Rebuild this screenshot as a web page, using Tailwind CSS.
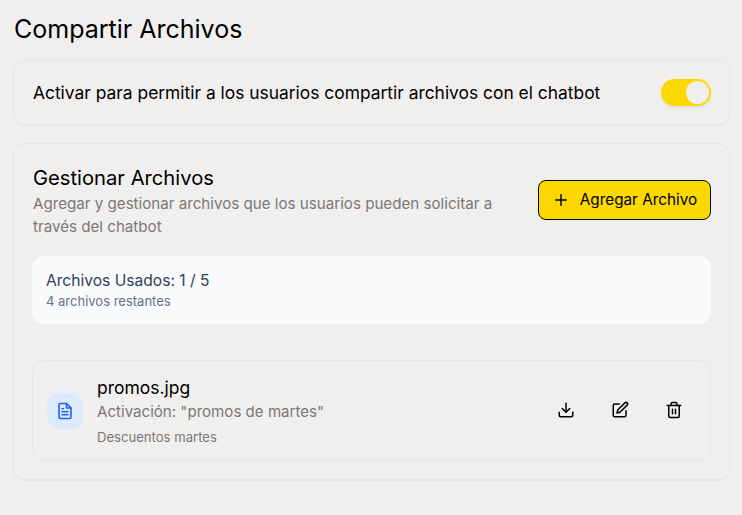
<!DOCTYPE html>
<html lang="es">
<head>
    <meta charset="utf-8">
    <title>Compartir Archivos</title>
    <script src="https://cdn.jsdelivr.net/npm/@tailwindcss/browser@4"></script>
</head>
<body class="min-h-screen bg-[#f1efee] overflow-hidden font-['Inter',sans-serif] text-black">
    <main class="w-[742px] pl-[13px] pr-[12px] pt-[13px]">
        <h1 class="pl-[1px] text-[25px] leading-8 font-normal">Compartir Archivos</h1>

        <section class="mt-[15px] h-[65px] pl-[19px] pr-[18px] flex items-center justify-between border border-[#e9e7e6] rounded-xl shadow-xs">
            <p class="text-[17.4px] leading-6">Activar para permitir a los usuarios compartir archivos con el chatbot</p>
            <div class="w-[50px] h-[27px] p-[2px] rounded-full bg-[#fbd800] flex justify-end shadow-md shadow-black/5">
                <div class="w-[23px] h-[23px] rounded-full bg-[#f1efee]"></div>
            </div>
        </section>

        <section class="mt-[18px] h-[337px] pl-[18px] pr-[18px] pt-[22px] border border-[#e9e7e6] rounded-xl shadow-xs">
            <div class="flex items-center justify-between">
                <div class="w-[480px] pl-[1px]">
                    <h2 class="text-[20.2px] leading-6 font-normal">Gestionar Archivos</h2>
                    <p class="mt-[2px] text-[15.15px] leading-[23px] text-[#7a7876]">Agregar y gestionar archivos que los usuarios pueden solicitar a través del chatbot</p>
                </div>
                <button class="mb-[4px] w-[173px] h-[40px] flex items-center justify-center gap-[10px] bg-[#fbd800] border border-black rounded-lg text-[15.3px]">
                    <svg class="w-[18px] h-[18px]" viewBox="0 0 24 24" fill="none" stroke="currentColor" stroke-width="2" stroke-linecap="round"><path d="M5 12h14M12 5v14"/></svg>
                    <span>Agregar Archivo</span>
                </button>
            </div>

            <div class="mt-[18px] h-[68px] px-[14px] pt-[15px] bg-[#f8fafc] rounded-xl">
                <p class="text-[15.6px] leading-[20px] text-[#334155]">Archivos Usados: 1 / 5</p>
                <p class="text-[13px] leading-[20px] text-[#64748b]">4 archivos restantes</p>
            </div>

            <div class="mt-[36px] h-[101px] pl-[14px] pr-[18px] flex items-center justify-between border border-[#e9e7e6] rounded-xl">
                <div class="flex items-center gap-[14px]">
                    <div class="w-9 h-9 rounded-xl bg-[#dbeafe] flex items-center justify-center">
                        <svg class="w-[18px] h-[18px] text-[#2563eb]" viewBox="0 0 24 24" fill="none" stroke="currentColor" stroke-width="2.2" stroke-linecap="round" stroke-linejoin="round"><path d="M14 2H6a2 2 0 0 0-2 2v16a2 2 0 0 0 2 2h12a2 2 0 0 0 2-2V8z"/><path d="M14 2v6h6"/><path d="M8 13h8M8 17h8M8 9h2"/></svg>
                    </div>
                    <div class="pt-[1px]">
                        <p class="text-[17.5px] leading-6">promos.jpg</p>
                        <p class="text-[15.1px] leading-[23px] text-[#7a7876]">Activación: "promos de martes"</p>
                        <p class="mt-[4px] text-[13.1px] leading-[20px] text-[#7a7876]">Descuentos martes</p>
                    </div>
                </div>
                <div class="flex items-center gap-[18px] pb-[2px]">
                    <button class="w-9 h-9 flex items-center justify-center">
                        <svg class="w-[18px] h-[18px]" viewBox="0 0 24 24" fill="none" stroke="currentColor" stroke-width="2" stroke-linecap="round" stroke-linejoin="round"><path d="M21 15v4a2 2 0 0 1-2 2H5a2 2 0 0 1-2-2v-4"/><path d="M7 10l5 5 5-5"/><path d="M12 15V3"/></svg>
                    </button>
                    <button class="w-9 h-9 flex items-center justify-center">
                        <svg class="w-[18px] h-[18px]" viewBox="0 0 24 24" fill="none" stroke="currentColor" stroke-width="2" stroke-linecap="round" stroke-linejoin="round"><path d="M11 4H5a2 2 0 0 0-2 2v13a2 2 0 0 0 2 2h13a2 2 0 0 0 2-2v-6"/><path d="M18.5 2.5a2.12 2.12 0 0 1 3 3L12 15l-4 1 1-4z"/></svg>
                    </button>
                    <button class="w-9 h-9 flex items-center justify-center">
                        <svg class="w-[18px] h-[18px]" viewBox="0 0 24 24" fill="none" stroke="currentColor" stroke-width="2" stroke-linecap="round" stroke-linejoin="round"><path d="M3 6h18"/><path d="M19 6v14a2 2 0 0 1-2 2H7a2 2 0 0 1-2-2V6"/><path d="M8 6V4a2 2 0 0 1 2-2h4a2 2 0 0 1 2 2v2"/><path d="M10 11v6M14 11v6"/></svg>
                    </button>
                </div>
            </div>
        </section>
    </main>
</body>
</html>
